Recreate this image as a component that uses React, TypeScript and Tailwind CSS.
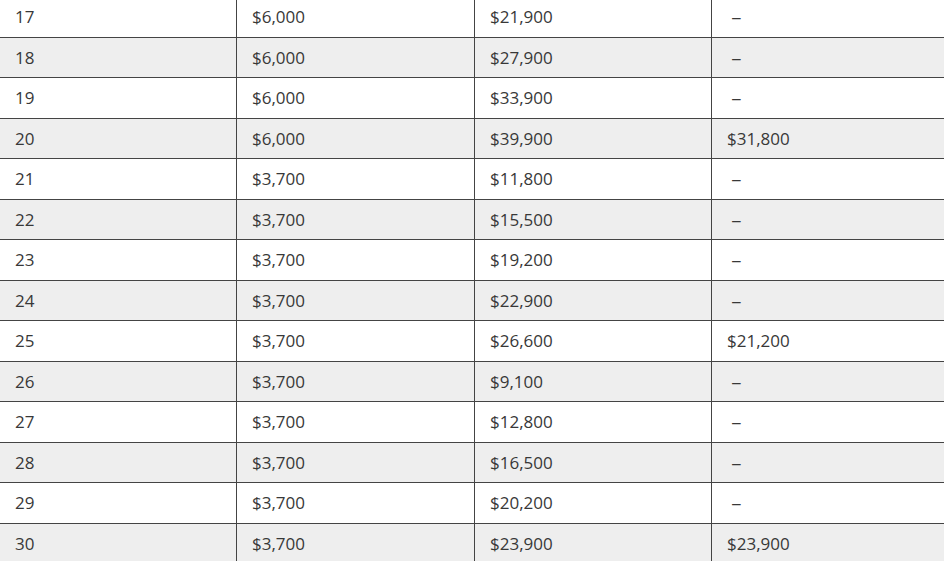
import React from "react";

const rows: [string, string, string, string][] = [
  ["17", "$6,000", "$21,900", "–"],
  ["18", "$6,000", "$27,900", "–"],
  ["19", "$6,000", "$33,900", "–"],
  ["20", "$6,000", "$39,900", "$31,800"],
  ["21", "$3,700", "$11,800", "–"],
  ["22", "$3,700", "$15,500", "–"],
  ["23", "$3,700", "$19,200", "–"],
  ["24", "$3,700", "$22,900", "–"],
  ["25", "$3,700", "$26,600", "$21,200"],
  ["26", "$3,700", "$9,100", "–"],
  ["27", "$3,700", "$12,800", "–"],
  ["28", "$3,700", "$16,500", "–"],
  ["29", "$3,700", "$20,200", "–"],
  ["30", "$3,700", "$23,900", "$23,900"],
];

export default function App() {
  return (
    <div className="h-[561px] w-[944px] overflow-hidden bg-white">
      <div
        className="mt-[-3px] text-[17px] text-[#383838] antialiased"
        style={{ fontFamily: '"Open Sans", "Noto Sans", sans-serif' }}
      >
        {rows.map((r, i) => (
          <div
            key={r[0]}
            className={`flex h-[40.5px] border-b border-[#444] ${i % 2 === 1 ? "bg-[#eeeeee]" : "bg-white"}`}
          >
            <div className="flex w-[237px] shrink-0 items-center border-r border-[#444] pl-[15px]">{r[0]}</div>
            <div className="flex w-[238px] shrink-0 items-center border-r border-[#444] pl-[15px]">{r[1]}</div>
            <div className="flex w-[237px] shrink-0 items-center border-r border-[#444] pl-[15px]">{r[2]}</div>
            <div className="flex flex-1 items-center pl-[15px]">
              {r[3] === "–" ? <span className="ml-[5px] inline-block scale-x-[1.2]">–</span> : r[3]}
            </div>
          </div>
        ))}
      </div>
    </div>
  );
}
